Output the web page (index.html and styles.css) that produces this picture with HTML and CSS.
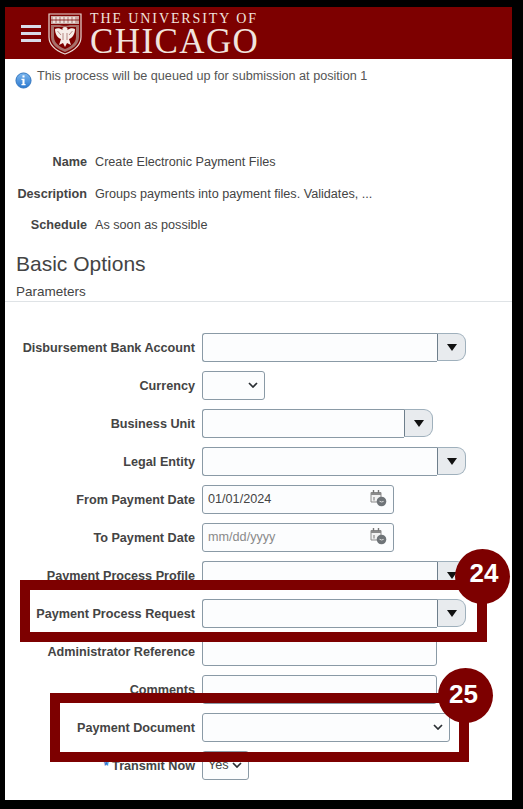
FILE: index.html
```html
<!DOCTYPE html>
<html lang="en">
<head>
    <meta charset="UTF-8">
    <meta name="viewport" content="width=device-width, initial-scale=1.0">
    <title>Create Electronic Payment Files</title>
    <link rel="stylesheet" href="styles.css">
</head>
<body>
<div class="page">
    <header class="main-header">
        <div class="hamburger"><span></span><span></span><span></span></div>
        <svg class="crest" viewBox="0 0 34 42" width="34" height="42">
            <path d="M1 1H33V24C33 33 25 38 17 41C9 38 1 33 1 24Z" fill="#7d0000" stroke="#e9d9d3" stroke-width="1.2"/>
            <path d="M3 3H31V11H3Z" fill="#c9a9a4"/>
            <path d="M6 4V10M10 4V10M14 4V10M18 4V10M22 4V10M26 4V10" stroke="#f6ece8" stroke-width="1.6"/>
            <path d="M3 7H31" stroke="#7d0000" stroke-width=".8"/>
            <path d="M3 12H12C13 13 21 13 22 12H31V24C31 32 24 36 17 39C10 36 3 32 3 24Z" fill="#a76f6a"/>
            <path d="M6 14H28V24C28 30 22 34 17 36C12 34 6 30 6 24Z" fill="#7d0000"/>
            <path d="M17 14C15 14 14 15 14.5 17C12 15 9.5 14.5 7 16C7 21 9.5 25 13 26L11 32L15 30L17 34L19 30L23 32L21 26C24.5 25 27 21 27 16C24.5 14.5 22 15 19.5 17C20 15 19 14 17 14Z" fill="#f6ece8"/>
            <path d="M15 20V27M19 20V27M9.5 18L13 22M24.5 18L21 22" stroke="#a76f6a" stroke-width=".8"/>
        </svg>
        <div class="wordmark">
            <div class="wordmark-top">THE UNIVERSITY OF</div>
            <div class="wordmark-main">CHICAGO</div>
        </div>
    </header>

    <div class="notice">
        <svg class="info-icon" viewBox="0 0 18 18" width="17" height="17">
            <defs>
                <linearGradient id="infoFill" x1="0" y1="0" x2="0" y2="1">
                    <stop offset="0" stop-color="#7db7ee"/>
                    <stop offset="1" stop-color="#2a78cf"/>
                </linearGradient>
            </defs>
            <circle cx="9" cy="9" r="8" fill="url(#infoFill)" stroke="#2f73bd"/>
            <rect x="7.9" y="3.6" width="2.2" height="2.2" fill="#fff"/>
            <path d="M6.8 7.2H10.1V12.6H11.2V14H6.8V12.6H7.9V8.6H6.8Z" fill="#fff"/>
        </svg>
        <span>This process will be queued up for submission at position 1</span>
    </div>

    <dl class="summary">
        <div class="summary-row"><dt>Name</dt><dd>Create Electronic Payment Files</dd></div>
        <div class="summary-row"><dt>Description</dt><dd>Groups payments into payment files. Validates, ...</dd></div>
        <div class="summary-row"><dt>Schedule</dt><dd>As soon as possible</dd></div>
    </dl>

    <h1>Basic Options</h1>
    <h2>Parameters</h2>

    <form class="params">
        <div class="row">
            <label>Disbursement Bank Account</label>
            <div class="combo"><input class="field w-235" type="text"><span class="combo-btn"><i></i></span></div>
        </div>
        <div class="row">
            <label>Currency</label>
            <div class="select w-63"><svg class="chev" viewBox="0 0 10 6" width="10" height="6"><path d="M1 1L5 5L9 1" /></svg></div>
        </div>
        <div class="row">
            <label>Business Unit</label>
            <div class="combo"><input class="field w-202" type="text"><span class="combo-btn"><i></i></span></div>
        </div>
        <div class="row">
            <label>Legal Entity</label>
            <div class="combo"><input class="field w-235" type="text"><span class="combo-btn"><i></i></span></div>
        </div>
        <div class="row">
            <label>From Payment Date</label>
            <div class="date">
                <input class="field w-191" type="text" value="01/01/2024">
                <svg class="cal" viewBox="0 0 18 18" width="18" height="18">
                    <path d="M2 3.5H12V13H2Z" fill="#f2f2f2" stroke="#8a8a8a"/><path d="M2 3H12V6H2Z" fill="#8a8a8a"/>
                    <path d="M4.5 1V4M9.5 1V4" stroke="#777" stroke-width="1.4"/><path d="M5 8V11.5" stroke="#777"/>
                    <circle cx="12.5" cy="12.5" r="4.8" fill="#6f7478"/><path d="M10.5 12.2L12.6 13L14.6 12.4" stroke="#ddd" fill="none"/>
                </svg>
            </div>
        </div>
        <div class="row">
            <label>To Payment Date</label>
            <div class="date">
                <input class="field w-191" type="text" placeholder="mm/dd/yyyy">
                <svg class="cal" viewBox="0 0 18 18" width="18" height="18">
                    <path d="M2 3.5H12V13H2Z" fill="#f2f2f2" stroke="#8a8a8a"/><path d="M2 3H12V6H2Z" fill="#8a8a8a"/>
                    <path d="M4.5 1V4M9.5 1V4" stroke="#777" stroke-width="1.4"/><path d="M5 8V11.5" stroke="#777"/>
                    <circle cx="12.5" cy="12.5" r="4.8" fill="#6f7478"/><path d="M10.5 12.2L12.6 13L14.6 12.4" stroke="#ddd" fill="none"/>
                </svg>
            </div>
        </div>
        <div class="row">
            <label>Payment Process Profile</label>
            <div class="combo"><input class="field w-235" type="text"><span class="combo-btn"><i></i></span></div>
        </div>
        <div class="row">
            <label>Payment Process Request</label>
            <div class="combo"><input class="field w-235" type="text"><span class="combo-btn"><i></i></span></div>
        </div>
        <div class="row">
            <label>Administrator Reference</label>
            <input class="field w-235" type="text">
        </div>
        <div class="row">
            <label>Comments</label>
            <input class="field w-235" type="text">
        </div>
        <div class="row">
            <label>Payment Document</label>
            <div class="select w-247"><svg class="chev" viewBox="0 0 10 6" width="10" height="6"><path d="M1 1L5 5L9 1" /></svg></div>
        </div>
        <div class="row">
            <label><span class="req">*</span> Transmit Now</label>
            <div class="select w-47"><span class="select-text">Yes</span><svg class="chev" viewBox="0 0 10 6" width="10" height="6"><path d="M1 1L5 5L9 1" /></svg></div>
        </div>
    </form>

    <!-- callouts over the form -->
    <div class="callout box-24"></div>
    <div class="callout box-25"></div>
    <div class="badge badge-24">24</div>
    <div class="badge badge-25">25</div>
</div>
</body>
</html>
```

FILE: styles.css
```css
html, body {
    margin: 0;
    padding: 0;
    background: #000;
}

body {
    padding: 7px 11px 9px 5px;
    font-family: "Liberation Sans", Arial, sans-serif;
    color: #444;
}

.page {
    position: relative;
    background: #fff;
    height: 793px;
    overflow: hidden;
}

/* Header */
.main-header {
    display: flex;
    align-items: center;
    height: 52px;
    background: #7d0000;
}

.hamburger {
    display: flex;
    flex-direction: column;
    gap: 4.5px;
    width: 20px;
    margin-left: 16px;
    margin-top: 1px;
}

.hamburger span {
    height: 2.5px;
    background: #d8dbe8;
}

.crest {
    margin-left: 7px;
    margin-top: 1px;
}

.wordmark {
    margin-left: 8px;
    margin-top: 2px;
    color: #f1e4de;
    font-family: "Liberation Serif", "Times New Roman", serif;
    white-space: nowrap;
}

.wordmark-top {
    font-size: 14px;
    line-height: 14px;
    letter-spacing: 1.9px;
}

.wordmark-main {
    font-size: 35px;
    line-height: 31px;
    letter-spacing: 1.4px;
}

/* Notice */
.notice {
    display: flex;
    align-items: flex-start;
    gap: 5px;
    margin: 10px 0 0 10px;
    font-size: 12.65px;
    line-height: 15px;
    color: #555;
}

.info-icon {
    margin-top: 3px;
}

.summary {
    margin: 66px 0 0;
    font-size: 12.65px;
}

.summary-row {
    display: flex;
    gap: 8px;
    height: 31.5px;
}

.summary dt {
    width: 82px;
    text-align: right;
    font-weight: bold;
}

.summary dd {
    margin: 0;
}

h1 {
    margin: 1px 0 0 11px;
    font-size: 21px;
    line-height: 26px;
    font-weight: normal;
    color: #444;
}

h2 {
    margin: 7px 0 0;
    padding: 0 0 2px 11px;
    height: 15px;
    font-size: 13.5px;
    line-height: 16px;
    font-weight: normal;
    color: #444;
    border-bottom: 1px solid #dfe3e6;
}

/* Form */
.params {
    display: flex;
    flex-direction: column;
    gap: 9px;
    margin-top: 31px;
}

.row {
    display: flex;
    align-items: center;
    gap: 7px;
    height: 29px;
}

.row label {
    width: 190px;
    flex: none;
    margin-top: 2px;
    text-align: right;
    font-size: 12.65px;
    font-weight: bold;
    white-space: nowrap;
}

.req {
    color: #2a78cf;
}

.field {
    box-sizing: border-box;
    height: 29px;
    padding: 0 5px;
    border: 1px solid #8a9aa6;
    border-radius: 3px;
    background: #fcfdfe;
    font-family: inherit;
    font-size: 12.65px;
    color: #444;
}

.field::placeholder {
    color: #8a8a8a;
    opacity: 1;
}

.w-235 { width: 235px; }
.w-202 { width: 202px; }
.w-191 { width: 192px; }
.w-63 { width: 63px; }
.w-47 { width: 47px; }
.w-247 { width: 248px; }

.combo {
    display: flex;
}

.combo .field {
    border-right: none;
    border-radius: 3px 0 0 3px;
}

.combo-btn {
    box-sizing: border-box;
    display: flex;
    align-items: center;
    justify-content: center;
    width: 29px;
    height: 28px;
    border: 1px solid #9fb0bc;
    border-left-color: #6e7f8c;
    border-radius: 0 9px 9px 0;
    background: #e8ebee;
}

.combo-btn i {
    width: 0;
    height: 0;
    border-left: 5px solid transparent;
    border-right: 5px solid transparent;
    border-top: 7px solid #111;
    margin-top: 1px;
}

.select {
    box-sizing: border-box;
    display: flex;
    align-items: center;
    justify-content: flex-end;
    height: 29px;
    padding: 0 6px 0 5px;
    border: 1px solid #8a9aa6;
    border-radius: 3px;
    background: #fcfdfe;
}

.select-text {
    flex: 1;
    font-size: 12.65px;
}

.chev {
    flex: none;
    fill: none;
    stroke: #2a2f33;
    stroke-width: 1.7;
}

.date {
    position: relative;
    display: flex;
}

.cal {
    position: absolute;
    top: 4px;
    right: 7px;
}

/* Callouts */
.callout {
    position: absolute;
    box-sizing: border-box;
    border: 10px solid #7d0000;
}

.box-24 {
    left: 15px;
    top: 573px;
    width: 467px;
    height: 62px;
}

.box-25 {
    left: 45px;
    top: 686px;
    width: 419px;
    height: 69px;
}

.badge {
    position: absolute;
    box-sizing: border-box;
    width: 55px;
    height: 55px;
    border-radius: 50%;
    background: #7d0000;
    color: #fff;
    font-size: 26px;
    font-weight: bold;
    text-align: center;
}

.badge-24 {
    left: 450px;
    top: 542px;
    padding-left: 3px;
    line-height: 48px;
}

.badge-25 {
    left: 433px;
    top: 661px;
    padding-right: 4px;
    line-height: 52px;
}
```
